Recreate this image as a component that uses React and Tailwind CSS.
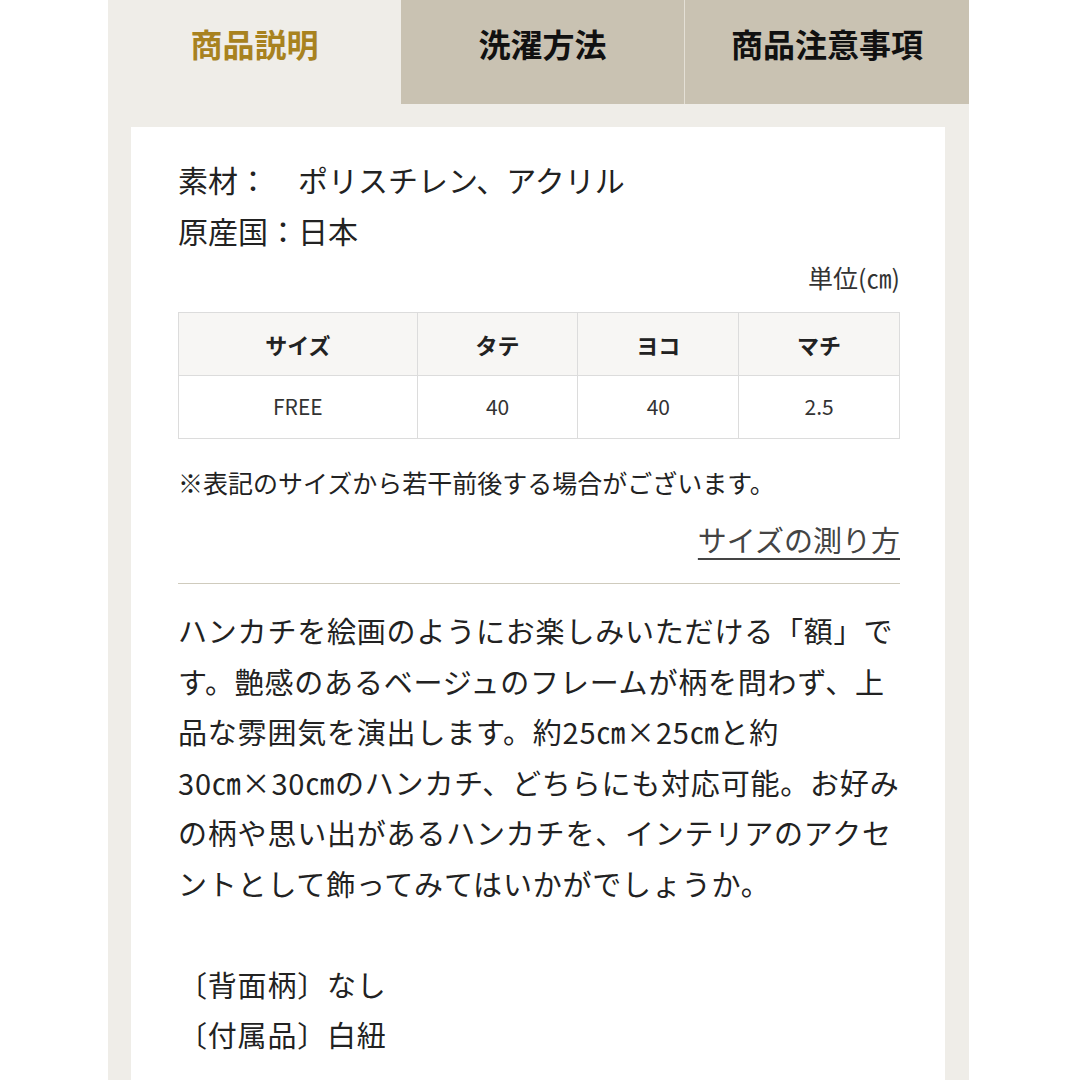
export default function App() {
  const font = { fontFamily: '"Noto Sans CJK JP", "Noto Sans", sans-serif' };

  return (
    <div className="min-h-screen w-[1080px] bg-white" style={font}>
      <div className="ml-[108px] w-[861px] min-h-[1080px] bg-[#efede8]">
        {/* tabs */}
        <div className="flex h-[104px]">
          <div className="w-[293px] flex items-center justify-center pb-[18px] text-[32px] font-bold text-[#a8821f]">
            商品説明
          </div>
          <div className="w-[283px] flex items-center justify-center pb-[18px] text-[32px] font-bold text-[#111] bg-[#c9c2b2]">
            洗濯方法
          </div>
          <div className="w-px bg-[#e4e0d6]" />
          <div className="flex-1 flex items-center justify-center pb-[18px] text-[32px] font-bold text-[#111] bg-[#c9c2b2]">
            商品注意事項
          </div>
        </div>

        {/* card */}
        <div className="mt-[23px] ml-[23px] w-[814px] min-h-[953px] bg-white pl-[47px] pr-[45px] pt-[26px] text-[#222]">
          <p className="text-[30px] leading-[52px]">素材：　ポリスチレン、アクリル</p>
          <p className="text-[30px] leading-[51px]">原産国：日本</p>

          <p className="mt-[3px] text-right text-[25px] leading-[36px] text-[#333]">単位(㎝)</p>

          <table className="mt-[17px] w-[722px] border-collapse text-center">
            <thead>
              <tr className="bg-[#f7f6f4] h-[63px]">
                <th className="w-[239px] border border-[#dcdcdc] text-[22px] font-bold">サイズ</th>
                <th className="w-[161px] border border-[#dcdcdc] text-[22px] font-bold">タテ</th>
                <th className="w-[161px] border border-[#dcdcdc] text-[22px] font-bold">ヨコ</th>
                <th className="w-[161px] border border-[#dcdcdc] text-[22px] font-bold">マチ</th>
              </tr>
            </thead>
            <tbody>
              <tr className="h-[63px] text-[21px] text-[#333]">
                <td className="border border-[#dcdcdc]">FREE</td>
                <td className="border border-[#dcdcdc]">40</td>
                <td className="border border-[#dcdcdc]">40</td>
                <td className="border border-[#dcdcdc]">2.5</td>
              </tr>
            </tbody>
          </table>

          <p className="mt-[25px] text-[25px] leading-[36px]">※表記のサイズから若干前後する場合がございます。</p>

          <div className="mt-[19px] text-right">
            <a className="text-[29px] leading-[40px] text-[#444] underline underline-offset-[6px] decoration-[2px]">
              サイズの測り方
            </a>
          </div>

          <div className="mt-[24px] h-px bg-[#cfcbbd]" />

          <div className="mt-[21px] text-[29px] leading-[50.5px] tracking-[0.8px] whitespace-nowrap">
            <p>ハンカチを絵画のようにお楽しみいただける「額」で</p>
            <p>す。艶感のあるベージュのフレームが柄を問わず、上</p>
            <p>品な雰囲気を演出します。約25㎝×25㎝と約</p>
            <p>30㎝×30㎝のハンカチ、どちらにも対応可能。お好み</p>
            <p>の柄や思い出があるハンカチを、インテリアのアクセ</p>
            <p>ントとして飾ってみてはいかがでしょうか。</p>
            <p>&nbsp;</p>
            <p>〔背面柄〕なし</p>
            <p>〔付属品〕白紐</p>
          </div>
        </div>
      </div>
    </div>
  );
}
